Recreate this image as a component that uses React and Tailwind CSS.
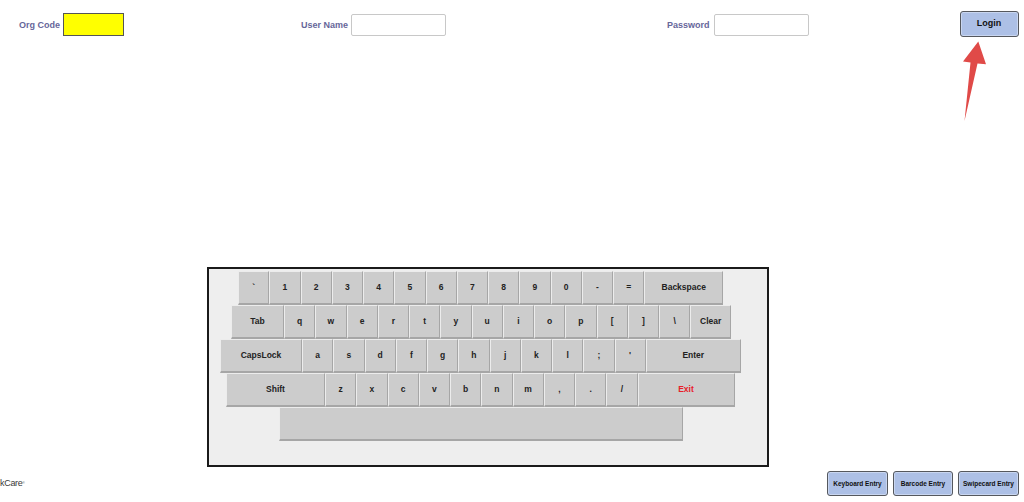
import React from "react";

const keyBase =
  "h-[34px] shrink-0 flex items-center justify-center bg-[#cccccc] border-t border-l border-t-[#ececec] border-l-[#ececec] border-r border-b-2 border-r-[#a6a6a6] border-b-[#a6a6a6] text-[8.5px] font-bold text-[#222]";

function Key({ label, w = "w-[31.25px]", red }) {
  return (
    <div className={`${keyBase} ${w} ${red ? "text-[#e8202a]" : ""}`}>{label}</div>
  );
}

const row1 = ["`", "1", "2", "3", "4", "5", "6", "7", "8", "9", "0", "-", "="];
const row2 = ["q", "w", "e", "r", "t", "y", "u", "i", "o", "p", "[", "]", "\\"];
const row3 = ["a", "s", "d", "f", "g", "h", "j", "k", "l", ";", "'"];
const row4 = ["z", "x", "c", "v", "b", "n", "m", ",", ".", "/"];

function BlueButton({ children, w, text }) {
  return (
    <div
      className={`${w} h-full flex items-center justify-center bg-[#adc0e6] border border-[#55585e] rounded-[3px] shadow-[inset_0_0_0_1px_#c9d6f0] font-bold text-[#111] ${text}`}
    >
      {children}
    </div>
  );
}

export default function App() {
  return (
    <div className="relative w-[1024px] h-[502px] bg-white overflow-hidden flex flex-col font-['Liberation_Sans',Arial,sans-serif]">
      {/* header */}
      <div className="flex items-center h-[26px] mt-[11px] pl-[19px]">
        <span className="mt-[4px] text-[9px] font-bold text-[#66669a]">Org Code</span>
        <div className="ml-[3px] w-[61px] h-[23px] bg-[#ffff00] border border-[#555]" />
        <span className="mt-[4px] ml-[177px] text-[9px] font-bold text-[#66669a]">User Name</span>
        <div className="ml-[3px] w-[95px] h-[22px] mt-[1px] bg-white border border-[#c8c8c8] rounded-[2px]" />
        <span className="mt-[4px] ml-[221px] text-[9px] font-bold text-[#66669a]">Password</span>
        <div className="ml-[4px] w-[95px] h-[22px] mt-[1px] bg-white border border-[#c8c8c8] rounded-[2px]" />
        <div className="ml-[151px] h-[26px]">
          <BlueButton w="w-[59px]" text="text-[9px]">Login</BlueButton>
        </div>
      </div>

      {/* keyboard */}
      <div className="mt-[230px] ml-[207px] w-[562px] h-[200px] border-2 border-[#1a1a1a] bg-[#eeeeee] pt-[2px] flex flex-col">
        <div className="flex ml-[29px]">
          {row1.map((k) => (
            <Key key={k} label={k} />
          ))}
          <Key label="Backspace" w="w-[79px]" />
        </div>
        <div className="flex ml-[22px]">
          <Key label="Tab" w="w-[53px]" />
          {row2.map((k) => (
            <Key key={k} label={k} />
          ))}
          <Key label="Clear" w="w-[41px]" />
        </div>
        <div className="flex ml-[11px]">
          <Key label="CapsLock" w="w-[82px]" />
          {row3.map((k) => (
            <Key key={k} label={k} />
          ))}
          <Key label="Enter" w="w-[95px]" />
        </div>
        <div className="flex ml-[17px]">
          <Key label="Shift" w="w-[99px]" />
          {row4.map((k) => (
            <Key key={k} label={k} />
          ))}
          <Key label="Exit" w="w-[97px]" red />
        </div>
        <div className="flex ml-[70px]">
          <Key label="" w="w-[404px]" />
        </div>
      </div>

      {/* bottom */}
      <div className="mt-[4px] h-[25px] flex items-center">
        <span className="text-[9px] text-[#3a3a3a] tracking-[-0.3px]">
          kCare<sup className="text-[3px]">®</sup>
        </span>
        <div className="ml-auto mr-[5px] h-full flex gap-[5px]">
          <BlueButton w="w-[61px]" text="text-[6.5px]">Keyboard Entry</BlueButton>
          <BlueButton w="w-[60px]" text="text-[6.5px]">Barcode Entry</BlueButton>
          <BlueButton w="w-[61px]" text="text-[6.5px]">Swipecard Entry</BlueButton>
        </div>
      </div>

      {/* red arrow */}
      <svg
        className="absolute left-0 top-0 pointer-events-none"
        width="1024"
        height="502"
        viewBox="0 0 1024 502"
      >
        <polygon
          points="964.5,121 970.5,62.5 963,61.5 978.3,41.5 986,64.3 977.5,63.5"
          fill="#e04a48"
        />
      </svg>
    </div>
  );
}
